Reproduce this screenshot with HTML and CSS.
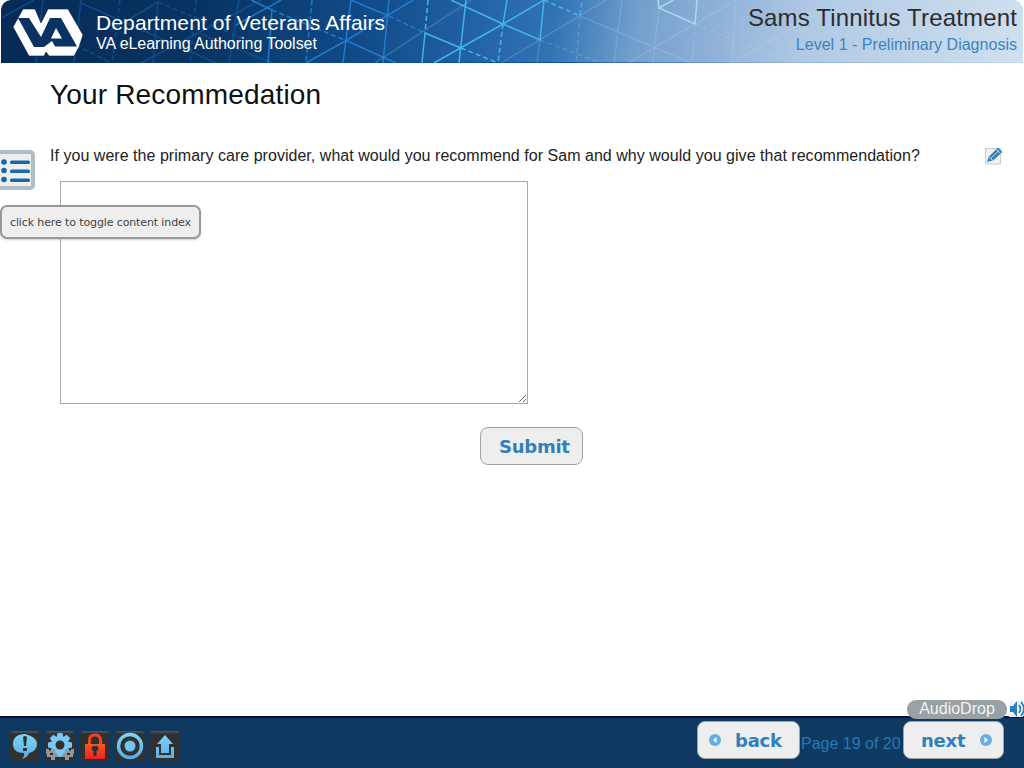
FILE: index.html
```html
<!DOCTYPE html>
<html lang="en">
<head>
<meta charset="utf-8">
<title>Sams Tinnitus Treatment</title>
<link rel="stylesheet" href="styles.css">
</head>
<body>
<div class="app">
<header class="banner">
  <svg class="banner-art" viewBox="0 0 1022 63" aria-hidden="true">
    <g class="deep"><path d="M0 18L33 0M42 0L35 63M80 0L73 63M157 2L152 63M238 0L228 63M110 30L157 2M140 63L260 0M80 3L215 63M200 34L271 63"/><path class="dash" d="M119 0L111 63M157 2L250 42M75 45L110 63M195 0L189 63"/></g>
    <g class="blue"><path d="M235 25L280 0M271 10L267 63M350 0L342 63M388 0L382 63M305 63L346 40L412 0M346 41L395 63M350 0L388 16M250 0L271 10"/><path class="dash" d="M311 0L305 63M271 10L346 41M388 16L424 33"/></g>
    <g class="cyan"><path d="M424 33L421 63M424 33L460 48M465 0L458 63M433 63L502 24L543 0L539 40L502 24L450 0M506 0L502 24"/><path class="dash" d="M427 0L424 33M460 48L497 63M502 24L497 63M543 0L579 16L581 0"/></g>
    <g class="pale"><path d="M657 0L658 8L694 24L696 0M658 8L672 0"/></g>
    <g class="faint"><path d="M374 63L470 0M500 63L605 0M579 16L690 63M627 63L735 0M621 0L613 63M658 8L652 63M735 0L731 63M539 40L536 63M731 63L840 0"/><path class="dash" d="M579 16L575 63M539 40L600 63M694 24L691 63M694 24L790 63"/></g>
  </svg>
  <div class="brand">
    <svg class="logo" viewBox="0 0 70 48" role="img" aria-label="VA"><path fill="#fff" stroke="#061f40" stroke-width=".6" d="M10 0H22L28 14L35 0H55L70 26L66 38L61 47H36L33 43L31 47H16L0 18Z"/><path fill="#0a3263" d="M5 9H16L28 28L37 9H48L64 37.500H42L39 32L31 38H21Z"/><path fill="#fff" d="M43 19L49 29.500H38Z"/></svg>
    <div><div class="agency">Department of Veterans Affairs</div><div class="toolset">VA eLearning Authoring Toolset</div></div>
  </div>
  <div class="course"><div class="course-title">Sams Tinnitus Treatment</div><div class="level">Level 1 - Preliminary Diagnosis</div></div>
</header>
<main class="content">
  <h1 class="title"><span>Your Recommedation</span></h1>
  <div class="question"><span class="prompt">If you were the primary care provider, what would you recommend for Sam and why would you give that recommendation?</span>
    <svg class="edit" viewBox="0 0 18 18"><path d="M.5 1.500H15.500V17H.5Z" fill="#f1f1f1" stroke="#ccc"/><path d="M2 15L3.500 10L13 .5L17.500 5L8 13.500Z" fill="#3580b9"/><path d="M3.500 10L8 13.500M5.500 11.500L14 3.500M11.500 2.500L15.500 6.500" stroke="#c5e0f1" fill="none"/></svg>
  </div>
  <textarea class="answer" aria-label="Your recommendation"></textarea>
  <button class="button submit"><span>Submit</span></button>
  <button class="index-toggle" aria-label="Content index"><svg viewBox="0 0 35 40"><g fill="#1767ad"><circle cx="4" cy="12" r="2.800"/><circle cx="4" cy="20.500" r="2.800"/><circle cx="4" cy="29.500" r="2.800"/><rect x="10" y="10.500" width="20" height="3.500" rx="1.500"/><rect x="10" y="19.500" width="20" height="3.500" rx="1.500"/><rect x="10" y="28.500" width="20" height="3.500" rx="1.500"/></g></svg></button>
  <div class="tooltip"><span>click here to toggle content index</span></div>
</main>
<footer class="bar">
  <nav class="tools">
    <svg viewBox="0 0 30 30"><use href="#tile"/><path fill="url(#sky)" d="M15 3C7 3 3 7 3 13S7 22 14 22Q15 25 12 28Q18 26 19 22Q27 20 27 13T15 3Z"/><path fill="#303030" d="M13 6Q15 4 17 6L16 15H14ZM13 17H17V20H13Z"/></svg>
    <svg viewBox="0 0 30 30"><use href="#tile"/><g transform="translate(15 14)"><g fill="#77c9ef"><circle r="9"/><g id="teeth"><path id="tooth" d="M-2.500-12H2.500L3.500-7H-3.500Z"/><use href="#tooth" transform="rotate(45)"/><use href="#tooth" transform="rotate(90)"/><use href="#tooth" transform="rotate(135)"/></g><use href="#teeth" transform="rotate(180)"/></g><circle r="4.500" fill="#303030"/></g><g fill="#939799"><path d="M1 18H4V20H7V18H10V22H12V26H10V29H6V26H2V23H1ZM29 18H26V20H23V18H20V22H18V26H20V29H24V26H28V23H29Z"/></g><path d="M5 22H8V24H5ZM22 22H25V24H22Z" fill="#303030"/></svg>
    <svg viewBox="0 0 30 30"><use href="#tile"/><path fill="none" stroke="#f4441b" stroke-width="3" d="M9.500 14V9Q9.500 4 15 4T20.500 9V14"/><path fill="url(#red)" d="M5 13H25V28H5Z"/><path fill="#303030" d="M15 15A2.500 2.500 0 0 1 16.500 20V25H13.500V20A2.500 2.500 0 0 1 15 15Z"/></svg>
    <svg viewBox="0 0 30 30"><use href="#tile"/><circle cx="15" cy="15" r="11.500" fill="none" stroke="url(#sky)" stroke-width="3.500"/><circle cx="15" cy="15" r="5.500" fill="#72c4ef"/></svg>
    <svg viewBox="0 0 30 30"><use href="#tile"/><path fill="url(#sky)" d="M15 4L23 13H19V22H11V13H7ZM6 16H9V24H21V16H24V27H6Z"/></svg>
  </nav>
  <div class="pager">
    <button class="button back"><svg class="arrow" viewBox="0 0 12 12"><circle cx="6" cy="6" r="6" fill="#66afe0"/><path d="M7.500 3L4 6L7.500 9Z" fill="#fff"/></svg><span>back</span></button>
    <span class="page">Page 19 of 20</span>
    <button class="button next"><span>next</span><svg class="arrow" viewBox="0 0 12 12"><circle cx="6" cy="6" r="6" fill="#66afe0"/><path d="M4.500 3L8 6L4.500 9Z" fill="#fff"/></svg></button>
  </div>
</footer>
<div class="audio"><span class="audio-label"><span>AudioDrop</span></span><svg viewBox="0 0 16 18"><path d="M0 1H14V17H0Z" fill="#eef4f7"/><path fill="#2a80bd" d="M1 6H4L8 1V17L4 12H1Z"/><path d="M10 5Q13 9 10 13M12 2Q18 9 12 16" fill="none" stroke="#2a80bd" stroke-width="1.800"/></svg></div>
</div>
<svg class="defs"><defs><linearGradient id="sky" x2="0" y2="1"><stop stop-color="#80d4f5"/><stop offset="1" stop-color="#58ade6"/></linearGradient><linearGradient id="red" x2="0" y2="1"><stop stop-color="#fa5921"/><stop offset="1" stop-color="#e82226"/></linearGradient><linearGradient id="tileShade" x2="0" y2="1"><stop stop-color="#555a5e"/><stop offset=".1" stop-color="#2e3032"/><stop offset="1" stop-color="#303132"/></linearGradient><rect id="tile" width="30" height="30" rx="4" fill="url(#tileShade)"/></defs></svg>
</body>
</html>
```
FILE: styles.css
```css
* { box-sizing: border-box; }
body { margin: 0; font-family: "Liberation Sans", Arial, sans-serif; background: #fff; }
.app { position: relative; display: flex; flex-direction: column; width: 1024px; height: 768px; overflow: hidden; }
.banner { position: relative; display: flex; justify-content: space-between; height: 63px; margin: 0 1px; overflow: hidden; border-radius: 10px 10px 0 0; background: linear-gradient(90deg, #06305e, #0f52a0 55%, #8ab0d9 75%, #c5d9ec) bottom / 100% 1px no-repeat, linear-gradient(98deg, #082b57 0%, #093563 20%, #104a87 35%, #2161a5 46%, #3273b4 54%, #739fce 62%, #91b2d8 70%, #b1cae4 79%, #cfe0f0 100%); }
.banner-art { position: absolute; inset: 0; width: 1022px; height: 63px; fill: none; stroke-width: 1.5; }
.deep { stroke: #1458a4; opacity: .65; }
.blue { stroke: #2380d6; opacity: .9; }
.cyan { stroke: #43b5e9; }
.pale { stroke: #abdbe9; }
.faint { stroke: #c8e4f5; opacity: .18; }
.dash { stroke-dasharray: 5 3; }
.brand { position: relative; display: flex; gap: 13px; padding: 9px 0 0 12px; color: #fff; }
.logo { width: 70px; height: 48px; overflow: visible; }
.agency { padding-top: 2px; font-size: 21px; line-height: 24px; letter-spacing: .12px; white-space: nowrap; }
.toolset { font-size: 16px; line-height: 18px; letter-spacing: -.03px; }
.course { position: relative; padding: 4px 6px 0 0; text-align: right; white-space: nowrap; }
.course-title { font-size: 24px; line-height: 28px; letter-spacing: .16px; color: #2d2d2d; }
.level { font-size: 16px; line-height: 25px; letter-spacing: .02px; color: #3d83be; }
.content { position: relative; height: 653px; padding: 15px 0 0 50px; }
.title { margin: 0; font-size: 28px; line-height: 34px; font-weight: 400; letter-spacing: .17px; color: #111; }
.question { display: flex; align-items: center; justify-content: space-between; height: 20px; margin: 34px 21px 15px 0; font-size: 16px; letter-spacing: .032px; color: #222; white-space: nowrap; }
.edit { width: 18px; height: 18px; }
.answer { display: block; width: 468px; height: 223px; margin-left: 10px; border: 1px solid #a9a9a9; background: #fff; }
.button { display: flex; align-items: center; height: 38px; border: 1px solid #9ba5ab; border-radius: 8px; background: #eee; color: #3080bc; padding: 0; font: bold 18px "DejaVu Sans", sans-serif; letter-spacing: -.25px; }
.submit { width: 103px; margin: 23px 0 0 430px; padding-left: 18px; }
.index-toggle { position: absolute; left: 0; top: 87px; width: 35px; height: 40px; padding: 0; border: 4px solid #b1bdc5; border-left: 0; border-radius: 0 5px 5px 0; background: #eee; }
.index-toggle svg { display: block; width: 35px; height: 40px; margin-top: -4px; }
.tooltip { position: absolute; left: 0; top: 142px; width: 201px; height: 34px; border: 2px solid #999; border-radius: 7px; padding-left: 8px; background: #eee; color: #444; font: 11px/31px "DejaVu Sans", sans-serif; letter-spacing: -.12px; white-space: nowrap; box-shadow: 0 1px 2px #8886; }
.bar { display: flex; justify-content: space-between; height: 52px; border-top: 2px solid #07133b; background: #0f3960; }
.tools { display: flex; gap: 5px; padding: 13px 0 0 10px; }
.tools svg { width: 30px; height: 30px; }
.pager { display: flex; padding: 3px 20px 0 0; }
.back { width: 103px; padding-left: 11px; gap: 14px; }
.next { width: 101px; padding-left: 17px; gap: 15px; }
.arrow { width: 12px; height: 12px; }
.page { width: 103px; padding-left: 1px; color: #2878b5; font-size: 16px; line-height: 45px; white-space: nowrap; }
.audio { position: absolute; left: 907px; top: 700px; display: flex; gap: 2px; }
.audio-label { display: flex; justify-content: center; width: 100px; height: 19px; border-radius: 9px; background: #98a1a6; color: #f4f4f4; font-size: 16px; line-height: 18px; }
.audio svg { width: 16px; height: 18px; }
.defs { position: absolute; width: 0; height: 0; }
```
